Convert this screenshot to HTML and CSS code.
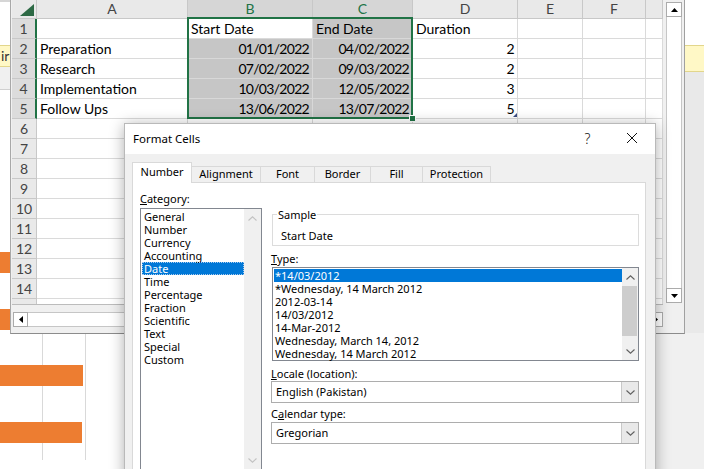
FILE: index.html
```html
<!DOCTYPE html>
<html lang="en">
<head>
<meta charset="utf-8">
<title>Format Cells</title>
<link rel="stylesheet" href="styles.css">
</head>
<body>
<div class="desktop">

  <div class="backdrop">
    <div class="back-top">
      <div class="strip-left">
        <div class="sl-ribbon"></div>
        <div class="sl-msg">ir</div>
        <div class="sl-bar"></div>
        <div class="sl-sheet">
          <div class="sbar sbar-a"></div>
          <div class="sbar sbar-b"></div>
        </div>
      </div>
      <div class="back-mid"></div>
      <div class="strip-right">
        <div class="sr-white"></div>
        <div class="sr-msg"></div>
        <div class="sr-gray"></div>
      </div>
    </div>
    <div class="back-bottom">
      <div class="gantt">
        <div class="gbar gbar-1"></div>
        <div class="gbar gbar-2"></div>
      </div>
      <div class="back-fill"></div>
    </div>
  </div>

  <div class="xl">
    <div class="xl-main">
      <div class="sheet">
        <div class="c h corner"><svg class="corner-tri" width="14" height="12" viewBox="0 0 14 12"><path d="M14 0V12H0Z"/></svg></div>
        <div class="c h">A</div>
        <div class="c h on">B</div>
        <div class="c h on">C</div>
        <div class="c h">D</div>
        <div class="c h">E</div>
        <div class="c h">F</div>
        <div class="c h"></div>

        <div class="c rh on">1</div>
        <div class="c"></div>
        <div class="c">Start Date</div>
        <div class="c sel">End Date</div>
        <div class="c">Duration</div>
        <div class="c"></div><div class="c"></div><div class="c"></div>

        <div class="c rh on">2</div>
        <div class="c">Preparation</div>
        <div class="c sel num">01/01/2022</div>
        <div class="c sel num">04/02/2022</div>
        <div class="c num">2</div>
        <div class="c"></div><div class="c"></div><div class="c"></div>

        <div class="c rh on">3</div>
        <div class="c">Research</div>
        <div class="c sel num">07/02/2022</div>
        <div class="c sel num">09/03/2022</div>
        <div class="c num">2</div>
        <div class="c"></div><div class="c"></div><div class="c"></div>

        <div class="c rh on">4</div>
        <div class="c">Implementation</div>
        <div class="c sel num">10/03/2022</div>
        <div class="c sel num">12/05/2022</div>
        <div class="c num">3</div>
        <div class="c"></div><div class="c"></div><div class="c"></div>

        <div class="c rh on">5</div>
        <div class="c">Follow Ups</div>
        <div class="c sel num">13/06/2022</div>
        <div class="c sel num">13/07/2022</div>
        <div class="c num">5</div>
        <div class="c"></div><div class="c"></div><div class="c"></div>

        <div class="c rh">6</div><div class="c"></div><div class="c"></div><div class="c"></div><div class="c"></div><div class="c"></div><div class="c"></div><div class="c"></div>
        <div class="c rh">7</div><div class="c"></div><div class="c"></div><div class="c"></div><div class="c"></div><div class="c"></div><div class="c"></div><div class="c"></div>
        <div class="c rh">8</div><div class="c"></div><div class="c"></div><div class="c"></div><div class="c"></div><div class="c"></div><div class="c"></div><div class="c"></div>
        <div class="c rh">9</div><div class="c"></div><div class="c"></div><div class="c"></div><div class="c"></div><div class="c"></div><div class="c"></div><div class="c"></div>
        <div class="c rh">10</div><div class="c"></div><div class="c"></div><div class="c"></div><div class="c"></div><div class="c"></div><div class="c"></div><div class="c"></div>
        <div class="c rh">11</div><div class="c"></div><div class="c"></div><div class="c"></div><div class="c"></div><div class="c"></div><div class="c"></div><div class="c"></div>
        <div class="c rh">12</div><div class="c"></div><div class="c"></div><div class="c"></div><div class="c"></div><div class="c"></div><div class="c"></div><div class="c"></div>
        <div class="c rh">13</div><div class="c"></div><div class="c"></div><div class="c"></div><div class="c"></div><div class="c"></div><div class="c"></div><div class="c"></div>
        <div class="c rh">14</div><div class="c"></div><div class="c"></div><div class="c"></div><div class="c"></div><div class="c"></div><div class="c"></div><div class="c"></div>

        <div class="c rh tail"></div><div class="c tail"></div><div class="c tail"></div><div class="c tail"></div><div class="c tail"></div><div class="c tail"></div><div class="c tail"></div><div class="c tail"></div>

        <div class="selection"></div>
        <div class="fill-handle"></div>
        <div class="qa"></div>
      </div>
      <div class="vscroll">
        <div class="sbtn"><svg width="7" height="4" viewBox="0 0 7 4"><path d="M3.5 0L7 4H0Z"/></svg></div>
        <div class="vtrack"></div>
        <div class="sbtn"><svg width="7" height="4" viewBox="0 0 7 4"><path d="M0 0H7L3.5 4Z"/></svg></div>
      </div>
    </div>
    <div class="hscroll">
      <div class="sbtn hb"><svg width="4" height="7" viewBox="0 0 4 7"><path d="M0 3.5L4 0V7Z"/></svg></div>
      <div class="htrack"></div>
      <div class="sbtn hb"><svg width="4" height="7" viewBox="0 0 4 7"><path d="M4 3.5L0 0V7Z"/></svg></div>
    </div>
  </div>

  <div class="dlg">
    <div class="dlg-title">
      <span class="dlg-caption">Format Cells</span>
      <span class="tbtn help">?</span>
      <span class="tbtn close"><svg width="10" height="10" viewBox="0 0 10 10"><path d="M0 0L10 10M10 0L0 10"/></svg></span>
    </div>
    <div class="dlg-body">
      <div class="tabs">
        <div class="tab active t-number">Number</div>
        <div class="tab t-align">Alignment</div>
        <div class="tab t-font">Font</div>
        <div class="tab t-border">Border</div>
        <div class="tab t-fill">Fill</div>
        <div class="tab t-prot">Protection</div>
      </div>
      <div class="panel">
        <div class="col-left">
          <div class="lbl"><u>C</u>ategory:</div>
          <div class="listbox cat">
            <ul class="items">
              <li>General</li>
              <li>Number</li>
              <li>Currency</li>
              <li>Accounting</li>
              <li class="hl focus">Date</li>
              <li>Time</li>
              <li>Percentage</li>
              <li>Fraction</li>
              <li>Scientific</li>
              <li>Text</li>
              <li>Special</li>
              <li>Custom</li>
            </ul>
            <div class="lscroll off">
              <div class="lbtn up"><svg width="9" height="5" viewBox="0 0 9 5"><path d="M0.5 4.5L4.5 0.8L8.5 4.5"/></svg></div>
              <div class="lspace"></div>
              <div class="lbtn down"><svg width="9" height="5" viewBox="0 0 9 5"><path d="M0.5 0.5L4.5 4.2L8.5 0.5"/></svg></div>
            </div>
          </div>
        </div>
        <div class="col-right">
          <fieldset class="sample">
            <legend>Sample</legend>
            <div class="sample-val">Start Date</div>
          </fieldset>
          <div class="lbl lbl-type"><u>T</u>ype:</div>
          <div class="listbox type">
            <ul class="items">
              <li class="hl">*14/03/2012</li>
              <li>*Wednesday, 14 March 2012</li>
              <li>2012-03-14</li>
              <li>14/03/2012</li>
              <li>14-Mar-2012</li>
              <li>Wednesday, March 14, 2012</li>
              <li>Wednesday, 14 March 2012</li>
            </ul>
            <div class="lscroll">
              <div class="lbtn up"><svg width="9" height="5" viewBox="0 0 9 5"><path d="M0.5 4.5L4.5 0.8L8.5 4.5"/></svg></div>
              <div class="thumb"></div>
              <div class="lspace"></div>
              <div class="lbtn down"><svg width="9" height="5" viewBox="0 0 9 5"><path d="M0.5 0.5L4.5 4.2L8.5 0.5"/></svg></div>
            </div>
          </div>
          <div class="lbl lbl-locale"><u>L</u>ocale (location):</div>
          <div class="combo"><span class="combo-val">English (Pakistan)</span><span class="dd"><svg width="9" height="5" viewBox="0 0 9 5"><path d="M0.5 0.5L4.5 4.2L8.5 0.5"/></svg></span></div>
          <div class="lbl lbl-cal">C<u>a</u>lendar type:</div>
          <div class="combo combo-cal"><span class="combo-val">Gregorian</span><span class="dd"><svg width="9" height="5" viewBox="0 0 9 5"><path d="M0.5 0.5L4.5 4.2L8.5 0.5"/></svg></span></div>
        </div>
      </div>
    </div>
  </div>

</div>
</body>
</html>
```

FILE: styles.css
```css
* { box-sizing: border-box; margin: 0; padding: 0; }
html, body { width: 704px; height: 469px; overflow: hidden; background: #fff; }
body { font-family: "Noto Sans", "Open Sans", sans-serif; color: #000; }

.desktop { position: relative; width: 704px; height: 469px; overflow: hidden; }

/* ---------- backdrop (sheet behind the windows) ---------- */
.backdrop { display: flex; flex-direction: column; width: 704px; height: 469px; }
.back-top { display: flex; height: 333px; flex: none; }
.strip-left { width: 10px; display: flex; flex-direction: column; }
.sl-ribbon { height: 45px; background: #fff; border-top: 2px solid #d6d6d6; }
.sl-msg { height: 22px; background: #fff8c6; border-top: 1px solid #e2d68c; border-bottom: 1px solid #e2d68c; font: 14px Lato, sans-serif; color: #333; line-height: 20px; padding-left: 1px; overflow: hidden; }
.sl-bar { height: 23px; background: #f0f0f0; border-bottom: 1px solid #d0d0d0; }
.sl-sheet { flex: 1; background: #fff; display: flex; flex-direction: column; }
.sbar { height: 21px; background: #ed7d31; flex: none; }
.sbar-a { margin-top: 162px; }
.sbar-b { margin-top: 36px; }
.back-mid { flex: 1; background: #fff; }
.strip-right { width: 19px; display: flex; flex-direction: column; }
.sr-white { height: 45px; background: #fff; }
.sr-msg { height: 27px; background: #fff8c6; border-top: 1px solid #e2d68c; border-bottom: 1px solid #e2d68c; }
.sr-gray { flex: 1; background: #e9e9e9; }

.back-bottom { display: flex; flex: 1; }
.gantt {
  width: 124px; display: flex; flex-direction: column;
  background-color: #fff;
  background-image: linear-gradient(#d9d9d9, #d9d9d9), linear-gradient(#d9d9d9, #d9d9d9);
  background-size: 1px 127px, 1px 127px;
  background-position: 42px 0, 85px 0;
  background-repeat: no-repeat;
}
.gbar { height: 21px; width: 83px; background: #ed7d31; flex: none; }
.gbar-1 { margin-top: 32px; }
.gbar-2 { margin-top: 36px; width: 82px; }
.back-fill { flex: 1; background: #f0f0f0; }

/* ---------- Excel window ---------- */
.xl {
  position: absolute; left: 10px; top: 0; width: 675px; height: 334px;
  background: #f0f0f0;
  border-left: 1px solid #a8a8a8; border-right: 1px solid #a0a0a0; border-bottom: 1px solid #8c8c8c;
  padding-left: 1px;
  display: flex; flex-direction: column;
}
.xl-main { display: flex; height: 305px; flex: none; }
.sheet {
  position: relative;
  display: grid;
  grid-template-columns: 25px 151px 125px 100px 105px 65px 63px 17px;
  grid-template-rows: 19px repeat(14, 20px) 5px;
  width: 651px; height: 305px;
  border-bottom: 1px solid #bcbcbc;
  background: #fff;
  font-family: Lato, "Liberation Sans", sans-serif; font-size: 14px;
}
.c {
  border-right: 1px solid #dadada; border-bottom: 1px solid #dadada;
  line-height: 19px; padding: 0 3px; white-space: nowrap; overflow: hidden;
}
.c.h { background: #e9e9e9; border-color: #c8c8c8; text-align: center; color: #444; padding: 0; line-height: 18px; }
.c.h.on { background: #d6d6d6; color: #217346; }
.c.corner { display: flex; align-items: flex-end; justify-content: flex-end; padding: 0 2px 2px 0; }
.corner-tri path { fill: #2d6a45; }
.c.rh { background: #e9e9e9; border-color: #c8c8c8; text-align: center; color: #444; padding: 0; }
.c.rh.on { background: #dcdcdc; border-right: 2px solid #217346; }
.c.sel { background: #c6c6c6; border-color: #d8d8d8; }
.c.num { text-align: right; letter-spacing: -0.7px; padding-right: 3px; }
.c.tail { border-bottom: none; }
.selection {
  position: absolute; left: 175px; top: 17px; width: 226px; height: 102px;
  border: 2px solid #217346; pointer-events: none;
}
.fill-handle {
  position: absolute; left: 397px; top: 115px; width: 7px; height: 7px;
  background: #217346; border: 1px solid #fff;
}
.qa {
  position: absolute; left: 501px; top: 113px; width: 4px; height: 4px;
  background: #3d4f86; clip-path: polygon(100% 0, 100% 100%, 0 100%);
}

.vscroll { margin-left: 3px; width: 16px; display: flex; flex-direction: column; padding: 2px 0; }
.sbtn { height: 15px; flex: none; background: #fff; border: 1px solid #ababab; display: flex; align-items: center; justify-content: center; }
.sbtn path { fill: #000; }
.vtrack { flex: 1; background: #fff; border-left: 1px solid #c6c6c6; border-right: 1px solid #c6c6c6; }

.hscroll { display: flex; width: 651px; height: 15px; margin-top: 7px; padding-left: 1px; flex: none; }
.sbtn.hb { width: 15px; height: 15px; }
.htrack { flex: 1; background: #fff; border-top: 1px solid #c6c6c6; border-bottom: 1px solid #c6c6c6; }

/* ---------- Format Cells dialog ---------- */
.dlg {
  position: absolute; left: 124px; top: 123px; width: 532px; height: 370px;
  background: #f0f0f0; border: 1px solid #b9b9b9;
  box-shadow: 0 2px 14px rgba(0,0,0,0.32);
  font-size: 11px;
}
.dlg-title { height: 30px; background: #fff; display: flex; align-items: center; padding: 0 0 2px 8px; }
.dlg-caption { flex: 1; font-size: 11.5px; }
.tbtn { width: 46px; height: 28px; display: flex; align-items: center; justify-content: center; }
.help { font-size: 14px; color: #111; font-weight: 300; padding-left: 3px; }
.close path { stroke: #111; stroke-width: 1; fill: none; }

.dlg-body { padding-left: 7px; }
.tabs { display: flex; align-items: flex-end; height: 20px; margin-top: 8px; position: relative; z-index: 1; }
.tab {
  height: 16px; background: #f0f0f0;
  border: 1px solid #d9d9d9; border-left: none; border-bottom: none;
  display: flex; align-items: center; justify-content: center;
  line-height: 14px; padding-bottom: 1px;
}
.tab.active { height: 21px; margin-bottom: -1px; background: #fff; border-left: 1px solid #d9d9d9; padding-bottom: 3px; }
.t-number { width: 60px; }
.t-align { width: 69px; }
.t-font { width: 54px; }
.t-border { width: 56px; }
.t-fill { width: 52px; }
.t-prot { width: 68px; }

.panel {
  width: 514px; height: 300px; background: #fff; border: 1px solid #d9d9d9;
  display: grid; grid-template-columns: 122px 368px; column-gap: 9px; align-items: start;
  padding: 8px 0 0 7px;
}
.col-left, .col-right { display: flex; flex-direction: column; }
.lbl { line-height: 15px; height: 15px; }
.lbl u { text-decoration-thickness: 1px; text-underline-offset: 1px; }

.listbox { display: flex; border: 1px solid #828790; background: #fff; }
.listbox.cat { margin-top: 2px; height: 262px; }
.items { list-style: none; flex: 1; padding: 1px 0 0 1px; }
.items li { height: 13px; line-height: 13px; padding-left: 2px; white-space: nowrap; }
.items li.hl { background: #0078d7; color: #fff; }
.items li.focus { outline: 1px dotted #a9cbee; outline-offset: -1px; }
.lscroll { width: 17px; background: #f0f0f0; display: flex; flex-direction: column; }
.lbtn { height: 18px; display: flex; align-items: center; justify-content: center; flex: none; }
.lbtn path { fill: none; stroke: #606060; stroke-width: 1.1; }
.lscroll.off .lbtn path { stroke: #c2c2c2; }
.lspace { flex: 1; }
.thumb { height: 50px; background: #cdcdcd; flex: none; margin: 0 1px 0 0; }

.listbox.type { margin: 1px 0 0 1px; width: 367px; height: 94px; }
.type .items li { padding-left: 1px; }
.type .lscroll { width: 16px; }

.sample { margin: 16px 0 0 1px; width: 367px; padding: 0 0 2px 8px; border: 1px solid #dcdcdc; }
.sample legend { padding: 0 1px; margin-left: -4px; line-height: 15px; }
.sample-val { margin-top: 6px; line-height: 15px; }
.lbl-type { margin-top: 5px; }
.lbl-locale { margin-top: 5px; }
.lbl-cal { margin-top: 3px; }

.combo { display: flex; height: 22px; border: 1px solid #adadad; background: #fff; }
.combo-cal { margin-top: 1px; }
.combo-val { flex: 1; padding-left: 4px; line-height: 20px; }
.dd { width: 17px; background: #e9e9e9; border-left: 1px solid #c8c8c8; display: flex; align-items: center; justify-content: center; }
.dd path { fill: none; stroke: #606060; stroke-width: 1.1; }
```
